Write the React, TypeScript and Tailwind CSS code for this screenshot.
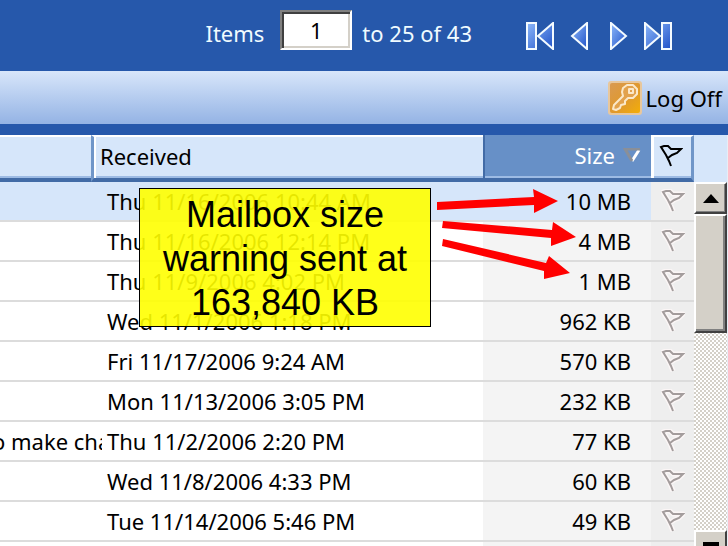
import type { ReactNode } from "react"

const messages = [
  { subject: "", received: "Thu 11/16/2006 10:44 AM", size: "10 MB", selected: true },
  { subject: "", received: "Thu 11/16/2006 12:14 PM", size: "4 MB" },
  { subject: "", received: "Thu 11/9/2006 4:02 PM", size: "1 MB" },
  { subject: "", received: "Wed 11/1/2006 1:18 PM", size: "962 KB" },
  { subject: "", received: "Fri 11/17/2006 9:24 AM", size: "570 KB" },
  { subject: "", received: "Mon 11/13/2006 3:05 PM", size: "232 KB" },
  { subject: "to make cha", received: "Thu 11/2/2006 2:20 PM", size: "77 KB" },
  { subject: "", received: "Wed 11/8/2006 4:33 PM", size: "60 KB" },
  { subject: "", received: "Tue 11/14/2006 5:46 PM", size: "49 KB" },
]

function FlagIcon({ className, halo }: { className: string; halo?: boolean }) {
  const shape = "M12 22L10 17L7 11L2 3L5 2L9 2L12 5L22 5L18 9L13 11L9 14"
  return (
    <svg viewBox="0 0 24 24" className={className} fill="none" aria-hidden="true">
      {halo && <path d={shape} stroke="#fbf6f6" strokeWidth="5" strokeLinejoin="round" />}
      <path d={shape} stroke="currentColor" strokeWidth="2" />
    </svg>
  )
}

function NavButton({ label, width, children }: { label: string; width: string; children: ReactNode }) {
  return (
    <button type="button" aria-label={label} className={`h-7 ${width}`}>
      {children}
    </button>
  )
}

function Pager() {
  return (
    <div className="flex items-center">
      <svg width="0" height="0" aria-hidden="true">
        <defs>
          <linearGradient id="nav" x1="0" y1="0" x2="1" y2="1">
            <stop offset="0" stopColor="#8db8fa" />
            <stop offset="1" stopColor="#1f52c8" />
          </linearGradient>
        </defs>
      </svg>
      <NavButton label="First page" width="w-7">
        <svg viewBox="0 0 28 28" fill="url(#nav)" stroke="#f4fbff" strokeWidth="2">
          <path d="M1 1h9v26H1zM27 1v26L12 14z" />
        </svg>
      </NavButton>
      <NavButton label="Previous page" width="ml-4 w-[18px]">
        <svg viewBox="0 0 18 28" fill="url(#nav)" stroke="#f4fbff" strokeWidth="2">
          <path d="M17 1v26L2 14z" />
        </svg>
      </NavButton>
      <NavButton label="Next page" width="ml-[22px] w-[18px]">
        <svg viewBox="0 0 18 28" fill="url(#nav)" stroke="#f4fbff" strokeWidth="2">
          <path d="M1 1v26L16 14z" />
        </svg>
      </NavButton>
      <NavButton label="Last page" width="ml-4 w-7">
        <svg viewBox="0 0 28 28" fill="url(#nav)" stroke="#f4fbff" strokeWidth="2">
          <path d="M18 1h9v26h-9zM1 1v26l15-13z" />
        </svg>
      </NavButton>
    </div>
  )
}

function KeyIcon() {
  return (
    <svg viewBox="0 0 34 34" className="size-[34px]" aria-hidden="true">
      <defs>
        <linearGradient id="key" x1="0" y1="0" x2="1" y2="1">
          <stop offset="0" stopColor="#d99a52" />
          <stop offset="0.55" stopColor="#e0992c" />
          <stop offset="1" stopColor="#f3ae08" />
        </linearGradient>
      </defs>
      <rect x="0" y="0" width="34" height="34" rx="3" fill="#e8c79c" />
      <rect x="2" y="2" width="30" height="30" rx="2" fill="url(#key)" />
      <path
        d="M15 7l4-3h6l4 4v5l-4 4h-5l-3 3v3l-4 1-1 3-4 2-3-1 1-4 9-9-1-4zM21 8h4v4h-4z"
        fill="#e2a24c"
        stroke="#fbe8c8"
        strokeWidth="2"
        strokeLinejoin="round"
      />
    </svg>
  )
}

function ScrollBar() {
  return (
    <div className="flex w-[34px] shrink-0 flex-col border-r border-[#e8eef6] bg-[#d6e6fa] pt-[47px]">
      <button
        type="button"
        aria-label="Scroll up"
        className="flex h-8 shrink-0 items-center justify-center border-2 border-t-white border-r-[#404040] border-b-[#404040] border-l-white bg-[#d4d0c8] shadow-[inset_-1px_-1px_0_#808080]"
      >
        <svg viewBox="0 0 16 9" className="h-[9px] w-4" aria-hidden="true">
          <path d="M8 0l8 9H0z" />
        </svg>
      </button>
      <div className="flex-1 bg-[repeating-conic-gradient(#d4d0c8_0_25%,#fff_0_50%)] bg-size-[4px_4px]">
        <div className="h-[119px] border-2 border-t-white border-r-[#404040] border-b-[#404040] border-l-white bg-[#d4d0c8] shadow-[inset_-2px_-2px_0_#808080]" />
      </div>
      <button
        type="button"
        aria-label="Scroll down"
        className="flex h-4 shrink-0 items-end justify-center border-2 border-b-0 border-t-white border-r-[#404040] border-l-white bg-[#d4d0c8]"
      >
        <svg viewBox="0 0 16 4" className="h-1 w-4" aria-hidden="true">
          <path d="M0 0h16v4H0z" />
        </svg>
      </button>
    </div>
  )
}

function MessageTable() {
  return (
    <table className="w-full table-fixed border-separate border-spacing-0">
      <colgroup>
        <col className="w-[91px]" />
        <col />
        <col className="w-[168px]" />
        <col className="w-[43px]" />
      </colgroup>
      <thead>
        <tr className="h-[47px] bg-[#d6e6fa] text-left">
          <th
            aria-label="Subject"
            className="border-t-2 border-b-4 border-t-white border-b-[#426ba6] p-0 shadow-[inset_0_-2px_0_#9dbbe4]"
          />
          <th className="border-t-2 border-b-4 border-l-3 border-t-white border-b-[#426ba6] border-l-[#7096c8] p-0 pb-1 pl-1.5 font-normal shadow-[inset_2px_0_0_#fff,inset_0_-2px_0_#9dbbe4]">
            Received
          </th>
          <th className="border-b-4 border-l-2 border-b-[#426ba6] border-l-[#426ba6] bg-[#6790c7] p-0 pr-2.5 pb-1 font-normal text-white shadow-[inset_0_-2px_0_#9dbbe4]">
            <div className="flex items-center justify-end gap-2">
              Size
              <svg viewBox="0 0 18 14" className="h-3.5 w-[18px]" fill="none" aria-hidden="true">
                <path d="M16 2L9 13" stroke="#fff" strokeWidth="3" />
                <path d="M17 1H2l7 12" stroke="#8a8f98" strokeWidth="3" />
              </svg>
            </div>
          </th>
          <th
            aria-label="Flag"
            className="border-t-2 border-r-3 border-b-4 border-t-white border-r-[#7096c8] border-b-[#426ba6] p-0 pb-1 shadow-[inset_3px_0_0_#fff,inset_0_-2px_0_#9dbbe4]"
          >
            <FlagIcon className="mx-auto size-6 text-black" />
          </th>
        </tr>
      </thead>
      <tbody>
        {messages.map((m) => (
          <tr key={m.received} className={m.selected ? "h-10 bg-[#d6e6fa]" : "h-10 bg-white"}>
            <td className="border-b-2 border-[#dcdcdc] p-0">
              <div className="-mr-[11px] overflow-hidden -indent-4 whitespace-nowrap">{m.subject}</div>
            </td>
            <td className="border-b-2 border-[#dcdcdc] p-0 pl-4 whitespace-nowrap">{m.received}</td>
            <td
              className={
                m.selected
                  ? "border-b-2 border-[#dcdcdc] p-0 pr-5 text-right"
                  : "border-b-2 border-[#dcdcdc] bg-[#f4f4f4] p-0 pr-5 text-right"
              }
            >
              {m.size}
            </td>
            <td className="border-b-2 border-[#dcdcdc] bg-[#eeeeee] p-0">
              <FlagIcon className="mx-auto size-6 text-[#a39c9c]" halo />
            </td>
          </tr>
        ))}
        <tr className="h-10 bg-white">
          <td colSpan={2} className="p-0" />
          <td className="bg-[#f4f4f4] p-0" />
          <td className="bg-[#eeeeee] p-0" />
        </tr>
      </tbody>
    </table>
  )
}

export default function App() {
  return (
    <div className="flex h-screen flex-col overflow-hidden bg-[#2658ab] font-['Noto_Sans',sans-serif] text-[22px] leading-7 text-black">
      <header className="flex h-[71px] shrink-0 items-center justify-end pr-14 text-[#f0fbff]">
        <div className="mr-[54px] flex items-center pb-1.5">
          <label htmlFor="first-item" className="mr-4">
            Items
          </label>
          <input
            id="first-item"
            defaultValue="1"
            className="mr-2.5 mb-1.5 h-10 w-[72px] border-2 border-t-[#808080] border-r-white border-b-white border-l-[#808080] bg-white text-center text-black shadow-[inset_2px_2px_0_#404040,inset_-2px_-2px_0_#d4d0c8]"
          />
          <span>to 25 of 43</span>
        </div>
        <Pager />
      </header>

      <div className="flex h-[53px] shrink-0 items-center justify-end bg-linear-to-b from-[#d8e6fa] to-[#94b3e4] pr-1.5">
        <button type="button" className="flex items-center gap-1">
          <KeyIcon />
          Log Off
        </button>
      </div>

      <main className="relative mt-[11px] flex min-h-0 flex-1 overflow-hidden">
        <div className="min-w-0 flex-1">
          <MessageTable />
        </div>
        <ScrollBar />

        {/* Callout and its arrows sit over the message list */}
        <div className="absolute top-[53px] left-[139px] w-[292px] border border-black bg-[#ffff00]/90 pt-1 pb-px text-center font-['Liberation_Sans',sans-serif] text-4xl leading-11">
          Mailbox size
          <br />
          warning sent at
          <br />
          163,840 KB
        </div>
        <svg viewBox="0 0 142 96" className="absolute top-[50px] left-[434px] h-24 w-[142px]" fill="#ff0000" aria-hidden="true">
          <path d="M3 17L100 12L99 4L124 16L100 28V20L3 25z" />
          <path d="M9 36L118 45L119 37L142 52L117 61V53L8 43z" />
          <path d="M9 54L112 78L115 71L136 88L110 94V86L8 61z" />
        </svg>
      </main>
    </div>
  )
}
